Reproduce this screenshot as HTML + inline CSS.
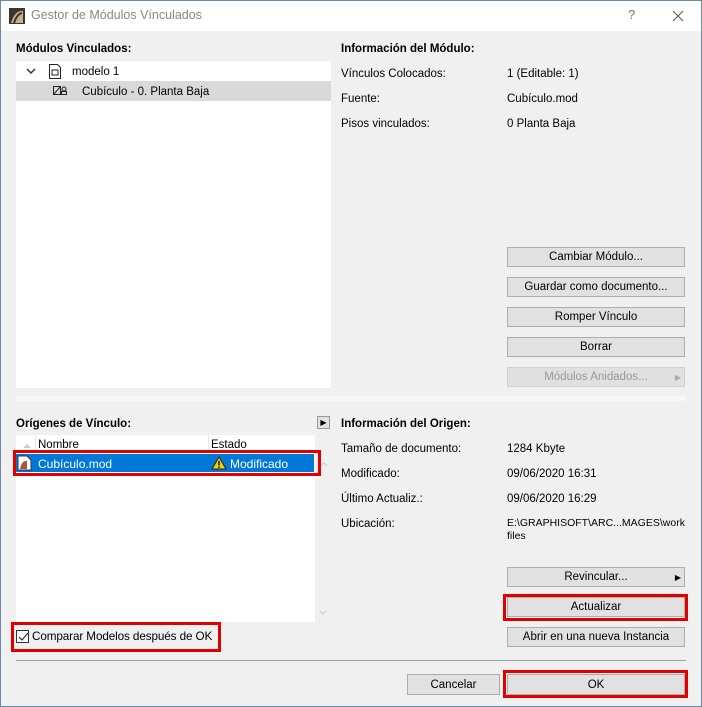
<!DOCTYPE html>
<html><head><meta charset="utf-8"><style>
*{margin:0;padding:0;box-sizing:border-box}
body{width:702px;height:707px;overflow:hidden;font-family:"Liberation Sans",Arial,sans-serif;font-size:11.5px;color:#000;background:#f0f0f0;position:relative}
.a{position:absolute;white-space:nowrap}
.win{position:absolute;left:0;top:0;width:702px;height:707px;border:1px solid #6a8aa8;}
.title{position:absolute;left:1px;top:1px;width:700px;height:30px;background:#fff}
.b{position:absolute;left:507px;width:178px;height:20px;background:#e1e1e1;border:1px solid #adadad;text-align:center;line-height:19px}
.red{position:absolute;border:3px solid #e00000}
.bold{font-weight:bold}
.t{margin-top:1px}
</style></head><body>
<div class="win"></div>
<div class="title"></div>
<svg class="a" style="left:9px;top:8px" width="16" height="16"><rect width="16" height="16" fill="#3a3530"/><path d="M2 15 Q6 2 14 3 L14 15 Z" fill="#c8b090"/><path d="M5 15 Q8 6 13 5" stroke="#3a3530" stroke-width="2" fill="none"/></svg>
<div class="a" style="left:31px;top:8px;font-size:12.5px;color:#888">Gestor de Módulos Vínculados</div>
<div class="a" style="left:628px;top:7px;font-size:13px;color:#777">?</div>
<svg class="a" style="left:672px;top:10px" width="12" height="12"><path d="M1 1L11 11M11 1L1 11" stroke="#555" stroke-width="1"/></svg>

<div class="a bold" style="left:16px;top:43px">Módulos Vinculados:</div>
<div class="a" style="left:16px;top:61px;width:315px;height:327px;background:#fff"></div>
<div class="a" style="left:16px;top:81px;width:315px;height:20px;background:#d9d9d9"></div>
<svg class="a" style="left:26px;top:68px" width="10" height="7"><path d="M1 1l4 4 4-4" fill="none" stroke="#333" stroke-width="1.5"/></svg>
<svg class="a" style="left:48px;top:64px" width="14" height="15"><path d="M1.5 .5h8l3 3v11h-11z" fill="none" stroke="#222"/><rect x="4" y="6" width="6" height="5" fill="none" stroke="#222"/></svg>
<div class="a" style="left:72px;top:66px">modelo 1</div>
<svg class="a" style="left:53px;top:86px" width="14" height="10"><rect x=".5" y=".5" width="7" height="8" fill="none" stroke="#222"/><path d="M1 8L7 1" stroke="#222"/><circle cx="11" cy="3" r="2" fill="none" stroke="#222"/><rect x="8.5" y="5.5" width="5" height="3" fill="none" stroke="#222"/></svg>
<div class="a" style="left:82px;top:86px">Cubículo - 0. Planta Baja</div>

<div class="a bold" style="left:341px;top:43px">Información del Módulo:</div>
<div class="a" style="left:341px;top:68px">Vínculos Colocados:</div>
<div class="a" style="left:507px;top:68px">1 (Editable: 1)</div>
<div class="a" style="left:341px;top:93px">Fuente:</div>
<div class="a" style="left:507px;top:93px">Cubículo.mod</div>
<div class="a" style="left:341px;top:118px">Pisos vinculados:</div>
<div class="a" style="left:507px;top:118px">0 Planta Baja</div>

<div class="b" style="top:247px">Cambiar Módulo...</div>
<div class="b" style="top:277px">Guardar como documento...</div>
<div class="b" style="top:307px">Romper Vínculo</div>
<div class="b" style="top:337px">Borrar</div>
<div class="b" style="top:367px;color:#999;background:#e0e0e0;border-color:#d0d0d0">Módulos Anidados...<span style="position:absolute;right:3px;font-size:8px;color:#aaa">▶</span></div>

<div class="a" style="left:16px;top:396px;width:670px;height:5px;background:#f7f7f7"></div>

<div class="a bold" style="left:16px;top:418px">Orígenes de Vínculo:</div>
<div class="a" style="left:317px;top:416px;width:13px;height:13px;border:1px solid #999;background:#e1e1e1;font-size:8px;line-height:11px;text-align:center">▶</div>
<div class="a" style="left:16px;top:435px;width:299px;height:187px;background:#fff"></div>
<div class="a" style="left:35px;top:435px;width:1px;height:17px;background:#e5e5e5"></div>
<div class="a" style="left:208px;top:435px;width:1px;height:17px;background:#e5e5e5"></div>
<svg class="a" style="left:22px;top:443px" width="10" height="6"><path d="M1 5L5 1 9 5z" fill="#ccc"/></svg>
<div class="a" style="left:38px;top:439px">Nombre</div>
<div class="a" style="left:211px;top:439px">Estado</div>
<div class="a" style="left:16px;top:454px;width:298px;height:18px;background:#0078d7"></div>
<svg class="a" style="left:17px;top:455px" width="15" height="16"><path d="M1 1h9l4 4v10H1z" fill="#fff" stroke="#334"/><path d="M3 14Q5 5 10 6V14z" fill="#a54"/></svg>
<div class="a" style="left:38px;top:457px;color:#fff;font-size:12px">Cubículo.mod</div>
<svg class="a" style="left:211px;top:456px" width="16" height="14"><path d="M8 1L15 13H1z" fill="#f5d000" stroke="#222"/><rect x="7.3" y="5" width="1.4" height="4.5" fill="#000"/><rect x="7.3" y="10.5" width="1.4" height="1.4" fill="#000"/></svg>
<div class="a" style="left:230px;top:457px;color:#fff;font-size:12px">Modificado</div>
<svg class="a" style="left:320px;top:462px" width="8" height="5"><path d="M1 4l3-3 3 3" fill="none" stroke="#ccc"/></svg>
<svg class="a" style="left:319px;top:610px" width="8" height="5"><path d="M1 1l3 3 3-3" fill="none" stroke="#ccc"/></svg>
<div class="red" style="left:13px;top:450px;width:308px;height:26px"></div>

<div class="a" style="left:16px;top:630px;width:13px;height:13px;border:1px solid #333;background:#fff"></div>
<svg class="a" style="left:17px;top:631px" width="12" height="12"><path d="M2 6l3 3 6-7" fill="none" stroke="#333" stroke-width="1.2"/></svg>
<div class="a" style="left:32px;top:630px;font-size:11.7px;letter-spacing:-0.1px">Comparar Modelos después de OK</div>
<div class="red" style="left:11px;top:622px;width:210px;height:30px"></div>

<div class="a bold" style="left:341px;top:418px">Información del Origen:</div>
<div class="a" style="left:341px;top:443px">Tamaño de documento:</div>
<div class="a" style="left:507px;top:443px">1284 Kbyte</div>
<div class="a" style="left:341px;top:468px">Modificado:</div>
<div class="a" style="left:507px;top:468px">09/06/2020 16:31</div>
<div class="a" style="left:341px;top:493px">Último Actualiz.:</div>
<div class="a" style="left:507px;top:493px">09/06/2020 16:29</div>
<div class="a" style="left:341px;top:518px">Ubicación:</div>
<div class="a" style="left:507px;top:517px;font-size:10.5px;line-height:13px;white-space:normal;width:180px">E:\GRAPHISOFT\ARC...MAGES\work files</div>

<div class="b" style="top:567px">Revincular...<span style="position:absolute;right:3px;font-size:8px">▶</span></div>
<div class="b" style="top:597px">Actualizar</div>
<div class="red" style="left:503px;top:594px;width:185px;height:27px"></div>
<div class="b" style="top:627px">Abrir en una nueva Instancia</div>

<div class="a" style="left:16px;top:660px;width:670px;height:1px;background:#a0a0a0"></div>
<div class="b" style="left:407px;width:93px;top:674px;height:21px;line-height:20px">Cancelar</div>
<div class="b" style="top:674px;height:21px;line-height:20px">OK</div>
<div class="red" style="left:503px;top:670px;width:185px;height:28px"></div>
</body></html>
